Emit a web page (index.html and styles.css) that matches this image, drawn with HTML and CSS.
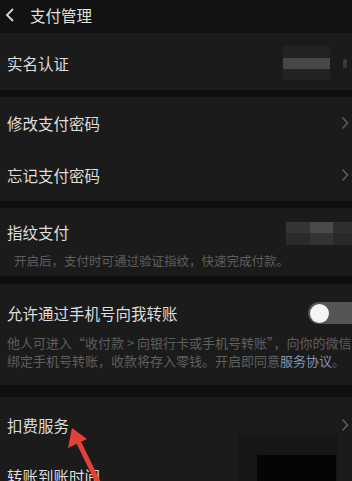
FILE: index.html
```
<!DOCTYPE html>
<html lang="zh-CN">
<head>
    <meta charset="UTF-8">
    <meta name="viewport" content="width=device-width, initial-scale=1.0">
    <title>支付管理</title>
    <link rel="stylesheet" href="styles.css">
</head>
<body>
    <div class="pantalla">
        <!-- cabecera -->
        <div class="cabecera">
            <svg class="volver" width="10" height="14" viewBox="0 0 10 14">
                <path d="M8 1 L2 7 L8 13" fill="none" stroke="#d6d6d6" stroke-width="1.8"/>
            </svg>
            <span class="titulo">支付管理</span>
        </div>

        <div class="fila fila-alta">
            <span class="rotulo">实名认证</span>
            <div class="mosaico">
                <div class="mosaico-claro"></div>
            </div>
            <div class="mosaico-punto"></div>
        </div>

        <div class="separador"></div>

        <div class="fila">
            <span class="rotulo">修改支付密码</span>
            <svg class="flecha" width="8" height="14" viewBox="0 0 8 14"><path d="M1.5 1.5 L6.5 7 L1.5 12.5" fill="none" stroke="#5c5c5c" stroke-width="1.6"/></svg>
        </div>
        <div class="fila">
            <span class="rotulo">忘记支付密码</span>
            <svg class="flecha" width="8" height="14" viewBox="0 0 8 14"><path d="M1.5 1.5 L6.5 7 L1.5 12.5" fill="none" stroke="#5c5c5c" stroke-width="1.6"/></svg>
        </div>

        <div class="separador"></div>

        <div class="bloque bloque-huella">
            <div class="bloque-cabeza">
                <span class="rotulo">指纹支付</span>
                <div class="mosaico-huella">
                    <div class="m1"></div><div class="m2"></div><div class="m3"></div>
                    <div class="m4"></div><div class="m5"></div><div class="m6"></div>
                </div>
            </div>
            <div class="nota nota-huella">开启后，支付时可通过验证指纹，快速完成付款。</div>
        </div>

        <div class="separador separador-ancho"></div>

        <div class="bloque bloque-telefono">
            <div class="bloque-cabeza">
                <span class="rotulo">允许通过手机号向我转账</span>
                <div class="interruptor"><div class="perilla"></div></div>
            </div>
            <div class="nota nota-telefono">他人可进入“收付款 &gt; 向银行卡或手机号转账”，向你的微信<br>绑定手机号转账，收款将存入零钱。开启即同意<span class="enlace">服务协议</span>。</div>
        </div>

        <div class="separador separador-grueso"></div>

        <div class="fila fila-cobro">
            <span class="rotulo">扣费服务</span>
            <svg class="flecha" width="8" height="14" viewBox="0 0 8 14"><path d="M1.5 1.5 L6.5 7 L1.5 12.5" fill="none" stroke="#5c5c5c" stroke-width="1.6"/></svg>
        </div>
        <div class="fila fila-ultima">
            <span class="rotulo">转账到账时间</span>
        </div>

        <!-- tapado oscuro y flecha roja sobre la captura -->
        <div class="tapado"><div class="tapado-negro"></div></div>
        <svg class="flecha-roja" width="352" height="481" viewBox="0 0 352 481">
            <line x1="99" y1="484" x2="79" y2="443" stroke="#e2413b" stroke-width="5" stroke-linecap="round"/>
            <polygon points="72,428 68,448 87,439" fill="#e2413b"/>
        </svg>
    </div>
</body>
</html>
```

FILE: styles.css
```
body {
    margin: 0;
    padding: 0;
    background-color: #101010;
    font-family: "Noto Sans CJK SC", "Noto Sans", sans-serif;
    color: #dcdcdc;
    overflow: hidden;
}

.pantalla {
    position: relative;
    width: 352px;
    height: 481px;
    overflow: hidden;
    background-color: #101010;
}

.cabecera {
    height: 33px;
    display: flex;
    align-items: center;
    background-color: #121212;
    padding-left: 5px;
}

.volver {
    margin-top: -4px;
}

.titulo {
    font-size: 15.5px;
    margin-left: 15px;
    margin-top: -4px;
    color: #e0e0e0;
}

.fila {
    height: 52px;
    display: flex;
    align-items: center;
    justify-content: space-between;
    background-color: #1b1b1b;
    padding: 0 3px 0 7px;
}

.fila-alta {
    height: 57px;
    padding-top: 3px;
    box-sizing: border-box;
    justify-content: flex-start;
}

.rotulo {
    font-size: 15.5px;
    line-height: 20px;
    color: #dedede;
}

.flecha {
    display: block;
}

.separador {
    height: 7px;
    background-color: #0f0f0f;
}

.separador-ancho {
    height: 8px;
}

.separador-grueso {
    height: 12px;
}

.mosaico {
    margin-left: auto;
    width: 47px;
    height: 34px;
    background-color: #222222;
    display: flex;
    align-items: center;
}

.mosaico-claro {
    width: 47px;
    height: 11px;
    background-color: #474747;
}

.mosaico-punto {
    width: 4px;
    height: 9px;
    margin-left: 13px;
    margin-right: 2px;
    background-color: #3a3a3a;
    border-radius: 2px;
}

.bloque {
    background-color: #1b1b1b;
    padding: 14px 0 0 7px;
    box-sizing: border-box;
}

.bloque-huella {
    height: 68px;
}

.bloque-telefono {
    height: 101px;
    padding-top: 19px;
}

.bloque-cabeza {
    display: flex;
    align-items: center;
    justify-content: space-between;
    height: 20px;
}

.nota {
    font-size: 12.5px;
    line-height: 18px;
    color: #5f5f5f;
}

.nota-huella {
    margin: 10px 0 0 7px;
    letter-spacing: 0;
}

.nota-telefono {
    margin-top: 11px;
    font-size: 13px;
    white-space: nowrap;
}

.enlace {
    color: #8593ad;
}

.mosaico-huella {
    display: grid;
    grid-template-columns: 24px 23px 19px;
    grid-template-rows: 11px 12px;
    margin-top: 2px;
}

.m1 { background-color: #353535; }
.m2 { background-color: #4a4a4a; }
.m3 { background-color: #2f2f2f; }
.m4 { background-color: #2b2b2b; }
.m5 { background-color: #333333; }
.m6 { background-color: #292929; }

.interruptor {
    width: 44px;
    height: 22px;
    border-radius: 11px 0 0 11px;
    background-color: #555555;
    display: flex;
    align-items: center;
    padding-left: 2px;
    box-sizing: border-box;
}

.perilla {
    width: 19px;
    height: 19px;
    border-radius: 50%;
    background-color: #f4f4f4;
}

.fila-cobro {
    height: 55px;
}

.fila-ultima {
    height: 52px;
    align-items: flex-start;
    padding-top: 14px;
    box-sizing: border-box;
}

.tapado {
    position: absolute;
    left: 238px;
    top: 435px;
    width: 100px;
    height: 46px;
    background-color: #161616;
}

.tapado-negro {
    position: absolute;
    left: 19px;
    top: 20px;
    width: 79px;
    height: 26px;
    background-color: #050505;
}

.flecha-roja {
    position: absolute;
    left: 0;
    top: 0;
    pointer-events: none;
}
```
